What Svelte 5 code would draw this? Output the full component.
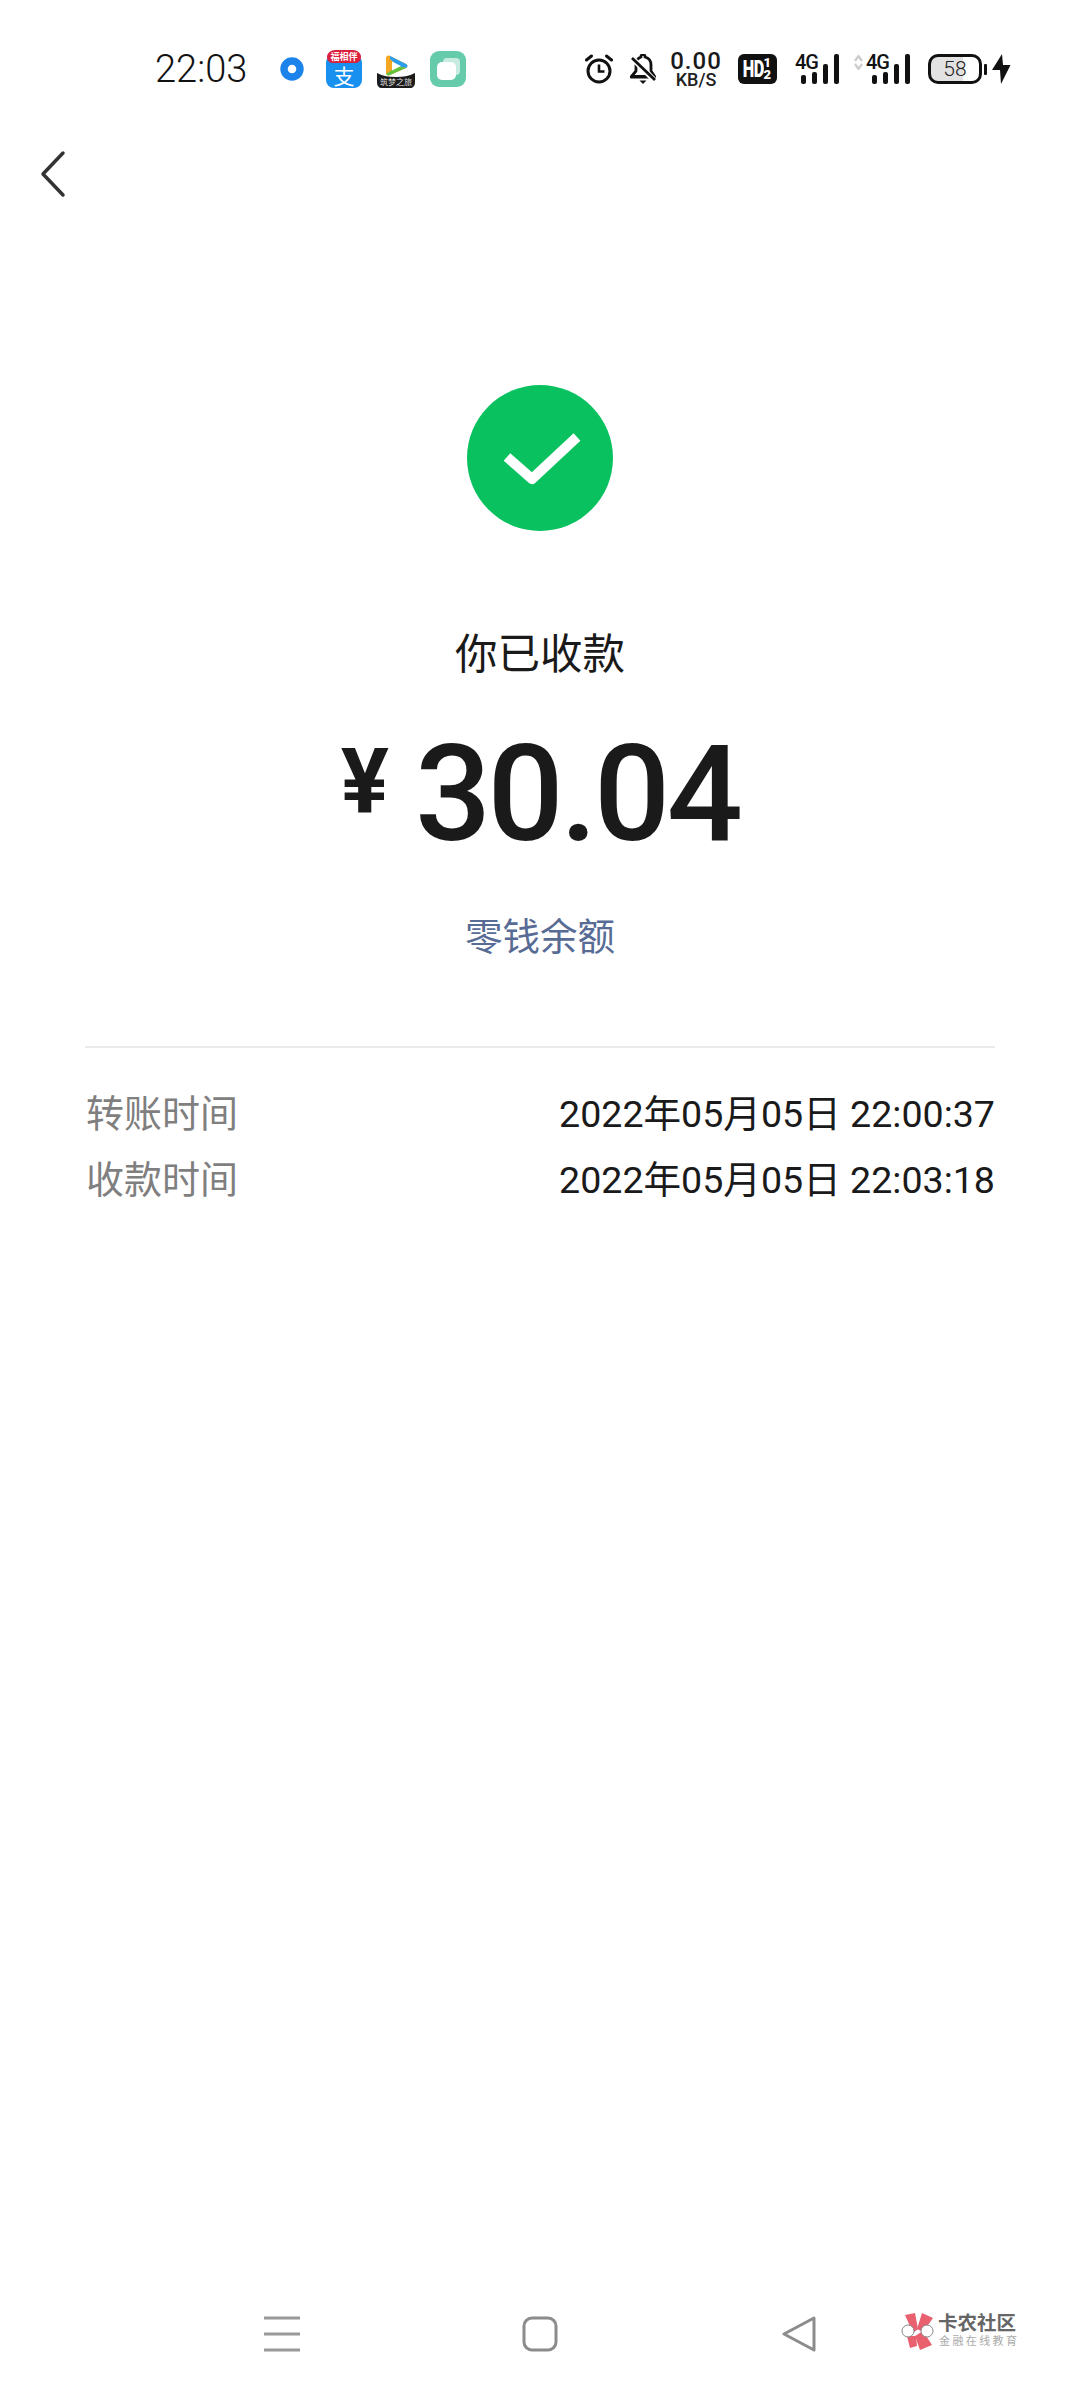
<script>
  const rows = [
    { label: '转账时间', value: '2022年05月05日 22:00:37' },
    { label: '收款时间', value: '2022年05月05日 22:03:18' }
  ];
</script>

<div class="page">
  <header class="status">
    <span class="clock">22:03</span>
    <div class="apps">
      <svg class="i-dot" viewBox="0 0 24 24"><circle cx="12" cy="12" r="8" fill="none" stroke="#1b83ea" stroke-width="7.400"/></svg>
      <svg class="i-ali" viewBox="0 0 36 38">
        <rect y="5" width="36" height="33" rx="8" fill="#1890f0"/>
        <path d="M1 7c0-4 4-7 8-7h18c4 0 8 3 8 7 0 4-3 6-6 6H7c-3 0-6-2-6-6z" fill="#dc1f3c"/>
        <text x="18" y="10" text-anchor="middle" class="ali-top">福相伴</text>
        <text x="18" y="34" text-anchor="middle" class="ali-zhi">支</text>
      </svg>
      <svg class="i-vid" viewBox="0 0 38 33">
        <path d="M9 3c0-2 2-3 4-2l16 8c2 1 2 3 0 4l-16 7c-2 1-4 0-4-2z" fill="#f5a623"/>
        <path d="M13 1l16 8c2 1 2 3 0 4l-8-2-8-7z" fill="#2a9df0"/>
        <path d="M29 13l-16 7c-2 1-3 0-4-1l12-8z" fill="#62c23e"/>
        <path d="M15 6.500l9 4.500-9 4.500z" fill="#fff"/>
        <path d="M0 18c6 3 12 4 19 4s13-1 19-4v9c0 4-2 6-5 6H5c-3 0-5-2-5-6z" fill="#1c1c1c"/>
        <text x="19" y="30" text-anchor="middle" class="vid-text">筑梦之旅</text>
      </svg>
      <svg class="i-card" viewBox="0 0 36 36">
        <rect width="36" height="36" rx="9" fill="#66cbab"/>
        <rect x="13" y="7" width="17" height="17" rx="4" fill="#c7ebdf"/>
        <rect x="7" y="11" width="19" height="18" rx="5" fill="#fff"/>
      </svg>
    </div>
    <div class="sys">
      <svg class="i-alarm" viewBox="0 0 28 30" fill="none" stroke="#111" stroke-width="3">
        <circle cx="14" cy="17" r="11"/>
        <path d="M14 10.500v7h5.500" stroke-width="2.600"/>
        <path d="M1.500 6l5-4M26.500 6l-5-4" stroke-linecap="round"/>
      </svg>
      <svg class="i-bell" viewBox="0 0 26 30">
        <path d="M13 0.500a2 2 0 0 1 2 2.500c4 1 6 4 6 8v6l4 6H1l5-6v-6c0-4 2-7 5-8a2 2 0 0 1 2-2.500z" fill="none" stroke="#111" stroke-width="2.800" stroke-linejoin="round"/>
        <path d="M1 21h24v3H1z" fill="#111"/>
        <path d="M9.500 26.500h7l-3.500 3.500z" fill="#111"/>
        <path d="M2 4l23 23" stroke="#fff" stroke-width="5.500"/>
        <path d="M2 4l23 22" stroke="#111" stroke-width="2.800"/>
      </svg>
      <div class="speed"><b>0.00</b><small>KB/S</small></div>
      <div class="hd"><span class="hd-main">HD</span><span class="frac"><i>1</i><i>2</i></span></div>
      <div class="sig">
        <span class="g4">4G</span>
        <div class="bars"><i class="b1"></i><i class="b2"></i><i class="b3"></i><i class="b4"></i></div>
      </div>
      <div class="sig second">
        <svg class="updown" viewBox="0 0 9 15"><path d="M1 6l3.500-5L8 6M1 9l3.500 5L8 9" fill="none" stroke="#ccc" stroke-width="2.200"/></svg>
        <span class="g4">4G</span>
        <div class="bars"><i class="b1"></i><i class="b2"></i><i class="b3"></i><i class="b4"></i></div>
      </div>
      <div class="batt"><div class="batt-body"><span class="batt-text">58</span></div><i class="nub"></i></div>
      <svg class="i-bolt" viewBox="0 0 19 30"><path d="M10 0L0 16h8l1 14 9.500-19H11z" fill="#111"/></svg>
    </div>
  </header>

  <nav class="top">
    <svg class="back" viewBox="0 0 26 48"><path d="M23 3L3 24l20 21" fill="none" stroke="#333" stroke-width="3.500" stroke-linecap="round" stroke-linejoin="round"/></svg>
  </nav>

  <main class="main">
    <svg class="ok" viewBox="0 0 146 146">
      <circle cx="73" cy="73" r="73" fill="#0ac160"/>
      <path d="M40 72l25 22 45-42" fill="none" stroke="#fff" stroke-width="10" stroke-linejoin="round"/>
    </svg>
    <h1 class="title">你已收款</h1>
    <div class="amount"><span class="yen">¥</span><span class="num">30.04</span></div>
    <a class="link" href="#balance">零钱余额</a>
    <hr class="rule" />
    <dl class="rows">
      {#each rows as r}
        <div class="row"><dt>{r.label}</dt><dd>{r.value}</dd></div>
      {/each}
    </dl>
  </main>

  <footer class="nav">
    <svg class="n-menu" viewBox="0 0 36 36"><path d="M0 2h36M0 18h36M0 34h36" stroke="#999" stroke-width="3"/></svg>
    <svg class="n-home" viewBox="0 0 36 36"><rect x="2" y="2" width="32" height="32" rx="8" fill="none" stroke="#8c8c8c" stroke-width="3"/></svg>
    <svg class="n-back" viewBox="0 0 36 36"><path d="M33 2L3 18l30 16z" fill="none" stroke="#8c8c8c" stroke-width="3" stroke-linejoin="round"/></svg>
    <div class="mark">
      <svg class="mark-logo" viewBox="0 0 35 37">
        <path d="M5 2l10-2 3 16-5 4z" fill="#e9606f"/>
        <path d="M22 0l11 5-10 14-6-3z" fill="#e9606f"/>
        <path d="M15 23l8-5 9 14-12 5z" fill="#e9606f"/>
        <path d="M7 23h9l1 10-7 2z" fill="#e9606f"/>
        <circle cx="8" cy="18" r="6" fill="#fff" stroke="#8a8a8a"/>
        <circle cx="27" cy="18" r="6" fill="#fff" stroke="#8a8a8a"/>
      </svg>
      <div class="mark-text"><strong>卡农社区</strong><span>金融在线教育</span></div>
    </div>
  </footer>
</div>

<style>
  :global(body) { margin: 0; background: #fff; }
  .page {
    width: 1080px; height: 2400px; display: flex; flex-direction: column;
    background: #fff; color: #1a1a1a; overflow: hidden;
    font-family: Roboto, "Noto Sans CJK SC", sans-serif;
  }
  .status { height: 48px; padding: 45px 69px 0 155px; display: flex; align-items: center; }
  .clock { font-size: 38px; font-weight: 300; line-height: 48px; color: #111; width: 125px; flex: none; }
  .apps { display: flex; align-items: center; }
  .i-dot { width: 24px; height: 24px; }
  .i-ali { width: 36px; height: 38px; margin-left: 22px; overflow: visible; }
  .ali-top { font-size: 9px; font-weight: 700; fill: #fff; font-family: "Noto Sans CJK SC", sans-serif; }
  .ali-zhi { font-size: 21px; fill: #fff; font-family: "Noto Sans CJK SC", sans-serif; }
  .i-vid { width: 38px; height: 33px; margin-left: 15px; margin-top: 4px; overflow: visible; }
  .vid-text { font-size: 8px; fill: #ddd; font-family: "Noto Sans CJK SC", sans-serif; }
  .i-card { width: 36px; height: 36px; margin-left: 15px; }
  .sys { display: flex; align-items: center; margin-left: auto; }
  .i-alarm { width: 28px; height: 30px; }
  .i-bell { width: 26px; height: 30px; margin-left: 17px; }
  .speed { width: 54px; margin-left: 13px; display: flex; flex-direction: column; align-items: center; line-height: 1; }
  .speed b { font-size: 24px; font-weight: 500; line-height: 21px; letter-spacing: 1px; }
  .speed small { font-size: 18px; font-weight: 500; line-height: 16px; color: #222; }
  .hd {
    margin-left: 15px; width: 39px; height: 30px; border-radius: 6px; background: #111; color: #fff;
    display: flex; align-items: center; justify-content: center; font-weight: 900;
  }
  .hd-main { display: inline-block; font-size: 24px; letter-spacing: -1px; transform: scaleX(0.68); margin: 0 -5px 0 -6px; }
  .frac { display: flex; flex-direction: column; font-size: 13px; line-height: 12px; }
  .frac i { font-style: normal; }
  .sig { position: relative; margin-left: 18px; width: 44px; height: 30px; }
  .second { width: 56px; margin-left: 15px; }
  .g4 { position: absolute; left: 0; top: -2px; font-size: 20px; font-weight: 500; line-height: 20px; letter-spacing: -1px; color: #111; }
  .second .g4 { left: 12px; }
  .updown { position: absolute; left: 0; top: 1px; width: 9px; height: 15px; }
  .bars { position: absolute; right: 0; bottom: 0; display: flex; align-items: flex-end; gap: 6px; }
  .bars i { display: block; width: 5px; border-radius: 2px; background: #111; }
  .b1 { height: 9px; } .b2 { height: 12px; } .b3 { height: 20px; } .b4 { height: 30px; }
  .batt { display: flex; align-items: center; margin-left: 18px; }
  .batt-body {
    width: 48px; height: 24px; border: 3px solid #111; border-radius: 10px;
    background: linear-gradient(90deg, #e2e2e2 66%, #fff 66%);
    display: flex; align-items: center; justify-content: center;
  }
  .batt-text { font-size: 21px; font-weight: 300; color: #222; }
  .nub { width: 3px; height: 11px; background: #111; margin-left: 2px; border-radius: 1px; }
  .i-bolt { width: 19px; height: 30px; margin-left: 5px; }

  .top { padding: 57px 0 0 40px; height: 78px; }
  .back { display: block; width: 26px; height: 48px; }

  .main { display: flex; flex-direction: column; align-items: center; padding: 0 85px; margin-top: 156.500px; }
  .ok { width: 146px; height: 146px; display: block; }
  .title { margin: 94px 0 0; font-size: 42.500px; font-weight: 400; line-height: 60px; color: #1a1a1a; }
  .amount { margin-top: 45.500px; display: flex; align-items: flex-start; height: 130px; }
  .yen { font-size: 90px; font-weight: 700; line-height: 105px; margin-right: 26px; color: #1a1a1a; }
  .num { font-size: 134px; font-weight: 500; line-height: 130px; letter-spacing: -3.500px; color: #1a1a1a; }
  .link { margin-top: 50px; font-size: 37.500px; line-height: 54px; color: #576b95; text-decoration: none; }
  .rule { align-self: stretch; margin: 82px 0 0; border: 0; height: 1.500px; background: #ebebeb; }
  .rows { align-self: stretch; margin: 29.500px 0 0; }
  .row { display: flex; justify-content: space-between; align-items: center; height: 66px; }
  dt { font-size: 38px; color: #7f7f7f; margin-left: 1px; }
  dd { margin: 0; font-size: 37.600px; color: #1a1a1a; }

  .nav { margin-top: auto; height: 84px; position: relative; display: flex; align-items: flex-start; padding-left: 264px; }
  .n-menu { width: 36px; height: 36px; }
  .n-home { width: 36px; height: 36px; margin-left: 222px; }
  .n-back { width: 36px; height: 36px; margin-left: 223px; }
  .mark { display: flex; margin-left: 83px; margin-top: -3px; }
  .mark-logo { width: 35px; height: 37px; }
  .mark-text { display: flex; flex-direction: column; margin-left: 3px; width: 80px; }
  .mark-text strong { font-size: 19.500px; line-height: 22px; font-weight: 700; color: #666; white-space: nowrap; }
  .mark-text span { font-size: 11px; line-height: 14px; letter-spacing: 2.400px; color: #aaa; white-space: nowrap; margin-left: 1px; }
</style>
